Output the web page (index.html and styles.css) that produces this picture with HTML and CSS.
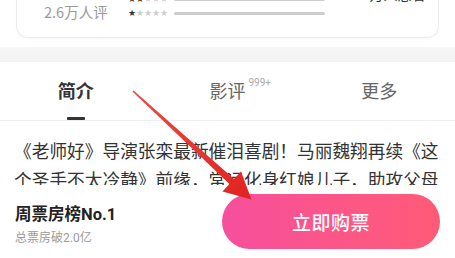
FILE: index.html
```html
<!DOCTYPE html>
<html lang="zh-CN">
<head>
<meta charset="utf-8">
<link rel="stylesheet" href="styles.css">
</head>
<body>
<div class="page">
  <section class="card">
    <div class="score-col">
      <span class="count">2.6万人评</span>
    </div>
    <div class="dist">
      <div class="row">
        <span class="stars"><i class="on">★</i><i class="on">★</i><i>★</i><i>★</i><i>★</i></span>
        <span class="bar"></span>
      </div>
      <div class="row">
        <span class="stars"><i class="on">★</i><i>★</i><i>★</i><i>★</i><i>★</i></span>
        <span class="bar"></span>
      </div>
    </div>
    <div class="want">4.1万人想看</div>
  </section>
  <div class="spacer"></div>
  <div class="band"></div>
  <nav class="tabs">
    <div class="tab active"><span class="label">简介</span><span class="line"></span></div>
    <div class="tab"><span class="label">影评<sup class="badge">999+</sup></span></div>
    <div class="tab"><span class="label">更多</span></div>
  </nav>
  <p class="intro">《老师好》导演张栾最新催泪喜剧！马丽魏翔再续《这个圣手不太冷静》前缘，常远化身红娘儿子，助攻父母黄昏恋，笑中带泪温暖人心。</p>
</div>
<footer class="buybar">
  <div class="info">
    <div class="rank">周票房榜No.1</div>
    <div class="box">总票房破2.0亿</div>
  </div>
  <button class="buy">立即购票</button>
</footer>
<svg class="arrow" width="455" height="258" viewBox="0 0 455 258" xmlns="http://www.w3.org/2000/svg">
  <defs>
    <linearGradient id="ag" x1="0" y1="0" x2="1" y2="1">
      <stop offset="0" stop-color="#ee4a44"/>
      <stop offset="1" stop-color="#e0231f"/>
    </linearGradient>
  </defs>
  <polygon fill="url(#ag)" points="132.4,91.6 229.4,184.1 222.5,191.6 251.5,199.5 241,171.4 234.1,178.9 133.6,90.4"/>
</svg>
</body>
</html>
```
FILE: styles.css
```css
html, body {
  margin: 0;
  padding: 0;
  background: #fff;
}
body {
  width: 455px;
  height: 258px;
  overflow: hidden;
  position: relative;
  font-family: Roboto, "Noto Sans CJK SC", sans-serif;
  color: #333;
}
.page {
  display: flex;
  flex-direction: column;
}
.card {
  margin: -8px 16px 0;
  height: 46px;
  box-sizing: border-box;
  border: 1px solid #ececec;
  border-top: none;
  border-radius: 0 0 12px 12px;
  box-shadow: 0 1px 3px rgba(0,0,0,0.03);
  display: flex;
  align-items: flex-start;
}
.score-col {
  width: 111px;
  padding-left: 27px;
  box-sizing: border-box;
  padding-top: 10px;
}
.count {
  font-size: 14.5px;
  line-height: 20px;
  color: #9a9a9a;
  white-space: nowrap;
  font-family: "Noto Sans CJK SC", sans-serif;
}
.dist {
  display: flex;
  flex-direction: column;
}
.row {
  height: 14px;
  display: flex;
  align-items: center;
  gap: 6px;
}
.stars {
  display: flex;
  width: 40px;
}
.stars i {
  font-style: normal;
  width: 8px;
  text-align: center;
  font-size: 9px;
  line-height: 14px;
  color: #cfcfcf;
  font-family: "DejaVu Sans", sans-serif;
}
.stars i.on {
  color: #333;
}
.bar {
  width: 151px;
  height: 3px;
  border-radius: 2px;
  background: #cdcdcd;
}
.want {
  margin-left: 25px;
  margin-top: -8.5px;
  font-size: 14px;
  line-height: 20px;
  color: #333;
  white-space: nowrap;
  font-family: "Noto Sans CJK SC", sans-serif;
}
.spacer {
  height: 9px;
}
.band {
  height: 15px;
  background: linear-gradient(#f7f7f7, #f3f3f3);
}
.tabs {
  display: grid;
  grid-template-columns: 1fr 1fr 1fr;
  height: 58px;
  border-bottom: 1px solid #efefef;
  font-family: "Noto Sans CJK SC", sans-serif;
}
.tab {
  display: flex;
  flex-direction: column;
  align-items: center;
  padding-top: 15px;
  position: relative;
}
.label {
  font-size: 18px;
  line-height: 26px;
  color: #666;
  position: relative;
}
.tab.active .label {
  font-weight: 700;
  color: #333;
}
.line {
  margin-top: 14px;
  width: 18px;
  height: 3px;
  background: #333;
  border-radius: 1px;
}
.badge {
  position: absolute;
  left: 39px;
  top: 0;
  font-size: 10px;
  line-height: 12px;
  color: #aaa;
  font-family: Roboto, sans-serif;
  vertical-align: baseline;
}
.intro {
  margin: 15px 0 0;
  padding: 0 14px;
  font-size: 17.7px;
  line-height: 29px;
  color: #333;
  font-family: "Noto Sans CJK SC", sans-serif;
}
.buybar {
  position: absolute;
  left: 0;
  right: 0;
  bottom: 0;
  height: 73px;
  background: #fff;
  display: flex;
  align-items: center;
  justify-content: space-between;
  padding: 0 15px 0 15px;
  box-sizing: border-box;
}
.info {
  display: flex;
  flex-direction: column;
  margin-top: 8px;
}
.rank {
  font-size: 16.5px;
  font-weight: 700;
  line-height: 22px;
  color: #222;
  font-family: Roboto, "Noto Sans CJK SC", sans-serif;
}
.box {
  font-size: 12px;
  line-height: 18px;
  color: #9a9a9a;
  margin-top: 3px;
  font-family: Roboto, "Noto Sans CJK SC", sans-serif;
}
.buy {
  width: 218px;
  height: 55px;
  margin-top: 0;
  border: none;
  border-radius: 28px;
  background: linear-gradient(90deg, #f64f9d 0%, #fd5785 60%, #ff5b77 100%);
  color: #fff;
  font-size: 19px;
  font-weight: 500;
  font-family: "Noto Sans CJK SC", sans-serif;
  letter-spacing: 0.5px;
  padding: 0;
}
.arrow {
  position: absolute;
  left: 0;
  top: 0;
  pointer-events: none;
}
```
